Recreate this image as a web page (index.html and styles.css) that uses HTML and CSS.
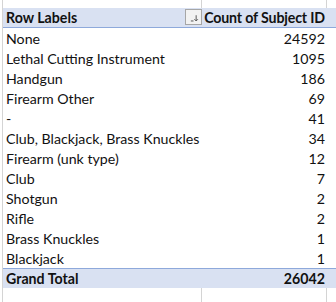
FILE: index.html
```html
<!DOCTYPE html>
<html>
<head>
<meta charset="utf-8">
<link rel="stylesheet" href="styles.css">
</head>
<body>
<div class="sheet">
  <div class="grid-row spacer top"><div class="c1"></div><div class="c2"></div></div>
  <div class="row head">
    <div class="lab">Row Labels
      <span class="dd"><svg width="17" height="16" viewBox="0 0 17 16"><path d="M5.5 12.5h3" stroke="#444" stroke-width="1"/><path d="M11.5 6v6" stroke="#444" stroke-width="1"/><path d="M9.5 10.5l2 2 2-2" stroke="#444" stroke-width="1" fill="none"/></svg></span>
    </div>
    <div class="val">Count of Subject ID</div>
  </div>
  <div class="row"><div class="lab">None</div><div class="val">24592</div></div>
  <div class="row"><div class="lab">Lethal Cutting Instrument</div><div class="val">1095</div></div>
  <div class="row"><div class="lab">Handgun</div><div class="val">186</div></div>
  <div class="row"><div class="lab">Firearm Other</div><div class="val">69</div></div>
  <div class="row"><div class="lab">-</div><div class="val">41</div></div>
  <div class="row"><div class="lab">Club, Blackjack, Brass Knuckles</div><div class="val">34</div></div>
  <div class="row"><div class="lab">Firearm (unk type)</div><div class="val">12</div></div>
  <div class="row"><div class="lab">Club</div><div class="val">7</div></div>
  <div class="row"><div class="lab">Shotgun</div><div class="val">2</div></div>
  <div class="row"><div class="lab">Rifle</div><div class="val">2</div></div>
  <div class="row"><div class="lab">Brass Knuckles</div><div class="val">1</div></div>
  <div class="row"><div class="lab">Blackjack</div><div class="val">1</div></div>
  <div class="row total"><div class="lab">Grand Total</div><div class="val">26042</div></div>
  <div class="grid-row spacer bottom"><div class="c1"></div><div class="c2"></div></div>
</div>
</body>
</html>
```
FILE: styles.css
```css
html, body {
  margin: 0;
  padding: 0;
  background: #ffffff;
}
body {
  font-family: Lato, "Open Sans", sans-serif;
  font-size: 14.2px;
  color: #111;
  width: 336px;
  height: 302px;
  overflow: hidden;
}
.sheet {
  margin-left: 2px;
  border-left: 1px solid #d4d4d4;
  width: 334px;
  height: 302px;
}
.grid-row {
  display: grid;
  grid-template-columns: 199px 125px;
}
.spacer.top { height: 8px; }
.spacer.bottom { height: 20px; }
.c1 { border-right: 1px solid #d4d4d4; }
.c2 { border-right: 1px solid #d4d4d4; }
.row {
  display: grid;
  grid-template-columns: 199px 125px;
  height: 20px;
  align-items: center;
}
.lab {
  padding-left: 3px;
  white-space: nowrap;
  display: flex;
  align-items: center;
  height: 20px;
}
.val {
  text-align: right;
  padding-right: 2px;
  white-space: nowrap;
}
.head {
  background: #d9e1f2;
  border-bottom: 1px solid #8ea9db;
  height: 19px;
  font-weight: bold;
}
.head .lab { height: 19px; position: relative; }
.head .val { letter-spacing: -0.15px; }
.total {
  background: #d9e1f2;
  border-top: 1px solid #8ea9db;
  height: 19px;
  font-weight: bold;
}
.total .lab { height: 19px; }
.dd {
  position: absolute;
  right: 0;
  top: 1px;
  width: 17px;
  height: 16px;
  box-sizing: border-box;
  border: 1px solid #a6a6a6;
  background: #f2f2f2;
  display: flex;
  align-items: center;
  justify-content: center;
}
.dd svg { display: block; }
```
